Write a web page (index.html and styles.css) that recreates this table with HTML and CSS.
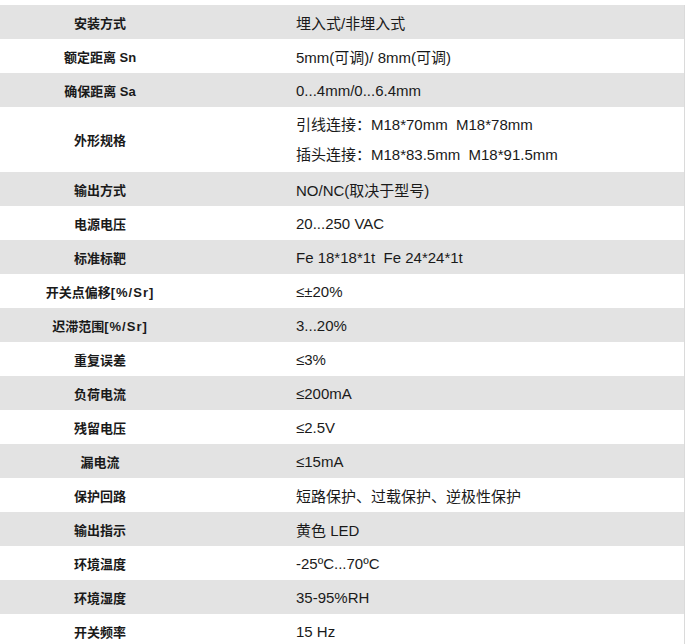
FILE: index.html
```html
<!DOCTYPE html>
<html lang="zh-CN">
<head>
<meta charset="utf-8">
<title>参数</title>
<link rel="stylesheet" href="styles.css">
</head>
<body>
<div class="spec">
  <div class="row alt"><div class="k">安装方式</div><div class="v">埋入式/非埋入式</div></div>
  <div class="row"><div class="k">额定距离 Sn</div><div class="v">5mm(可调)/ 8mm(可调)</div></div>
  <div class="row alt"><div class="k">确保距离 Sa</div><div class="v">0...4mm/0...6.4mm</div></div>
  <div class="row tall"><div class="k">外形规格</div><div class="v"><p>引线连接：M18*70mm&nbsp; M18*78mm</p><p>插头连接：M18*83.5mm&nbsp; M18*91.5mm</p></div></div>
  <div class="row alt"><div class="k">输出方式</div><div class="v">NO/NC(取决于型号)</div></div>
  <div class="row"><div class="k">电源电压</div><div class="v">20...250 VAC</div></div>
  <div class="row alt"><div class="k">标准标靶</div><div class="v">Fe 18*18*1t&nbsp; Fe 24*24*1t</div></div>
  <div class="row"><div class="k">开关点偏移<span class="u">[%/Sr]</span></div><div class="v">≤±20%</div></div>
  <div class="row alt"><div class="k">迟滞范围<span class="u">[%/Sr]</span></div><div class="v">3...20%</div></div>
  <div class="row"><div class="k">重复误差</div><div class="v">≤3%</div></div>
  <div class="row alt"><div class="k">负荷电流</div><div class="v">≤200mA</div></div>
  <div class="row"><div class="k">残留电压</div><div class="v">≤2.5V</div></div>
  <div class="row alt"><div class="k">漏电流</div><div class="v">≤15mA</div></div>
  <div class="row"><div class="k">保护回路</div><div class="v">短路保护、过载保护、逆极性保护</div></div>
  <div class="row alt"><div class="k">输出指示</div><div class="v">黄色 LED</div></div>
  <div class="row"><div class="k">环境温度</div><div class="v">-25ºC...70ºC</div></div>
  <div class="row alt"><div class="k">环境湿度</div><div class="v">35-95%RH</div></div>
  <div class="row"><div class="k">开关频率</div><div class="v">15 Hz</div></div>
</div>
</body>
</html>
```
FILE: styles.css
```css
html, body {
  margin: 0;
  padding: 0;
  background: #fff;
}
body {
  font-family: "Liberation Sans", "Noto Sans CJK SC", sans-serif;
  font-size: 13px;
  color: #1a1a1a;
}
.spec {
  margin-top: 5px;
  width: 684px;
  border-right: 1px solid #dadada;
}
.row {
  display: grid;
  grid-template-columns: 200px 1fr;
  height: 34px;
  align-items: center;
}
.row.alt {
  background: #e3e3e3;
}
.row.tall {
  height: 65px;
}
.k {
  text-align: center;
  font-weight: bold;
}
.k .u {
  letter-spacing: 1px;
}
.v {
  padding-left: 96px;
  font-size: 15px;
}
.v p {
  margin: 0;
  line-height: 30px;
}
```
